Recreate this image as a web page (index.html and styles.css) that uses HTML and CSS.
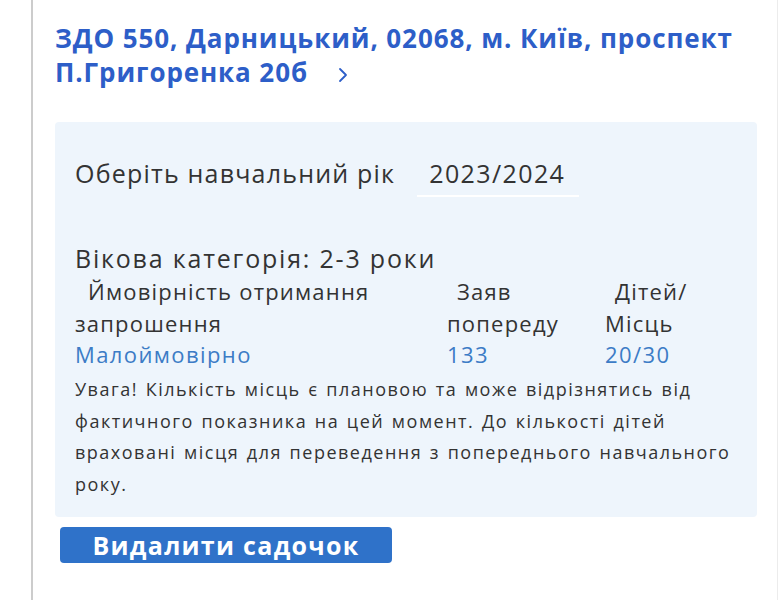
FILE: index.html
```html
<!DOCTYPE html>
<html lang="uk">
<head>
<meta charset="utf-8">
<title>ЗДО 550</title>
<link rel="stylesheet" href="styles.css">
</head>
<body>
<div class="page">
  <h2 class="title">ЗДО 550, Дарницький, 02068, м. Київ, проспект П.Григоренка 20б<svg class="chev" width="10" height="16" viewBox="0 0 10 16"><polyline points="2,2 8,8 2,14" fill="none" stroke="#2d5ec8" stroke-width="1.8" stroke-linecap="round" stroke-linejoin="round"/></svg></h2>
  <div class="panel">
    <div class="year-row">
      <span class="label">Оберіть навчальний рік</span>
      <span class="select">2023/2024</span>
    </div>
    <div class="age">Вікова категорія: 2-3 роки</div>
    <div class="table">
      <div class="th th-first">Ймовірність отримання запрошення</div>
      <div class="th th-mid">Заяв попереду</div>
      <div class="th th-last">Дітей/ Місць</div>
      <div class="td">Малоймовірно</div>
      <div class="td">133</div>
      <div class="td">20/30</div>
    </div>
    <p class="note">Увага! Кількість місць є плановою та може відрізнятись від фактичного показника на цей момент. До кількості дітей враховані місця для переведення з попереднього навчального року.</p>
  </div>
  <button class="btn">Видалити садочок</button>
</div>
</body>
</html>
```
FILE: styles.css
```css
html, body {
  margin: 0;
  padding: 0;
  background: #ffffff;
}
body {
  font-family: "Open Sans", "Liberation Sans", Arial, sans-serif;
  color: #333333;
}
.page {
  box-sizing: border-box;
  margin-left: 31px;
  width: 747px;
  min-height: 600px;
  border-left: 2px solid #cccccc;
  border-right: 1px solid #ececec;
  padding: 21px 20px 0 22px;
}
.title {
  margin: 0;
  font-size: 26px;
  line-height: 34px;
  font-weight: bold;
  letter-spacing: 0.9px;
  color: #2d5ec8;
}
.chev {
  margin-left: 30px;
  vertical-align: -1px;
}
.panel {
  margin-top: 33px;
  background: #eef5fc;
  border-radius: 4px;
  padding: 36px 20px 16px 20px;
}
.year-row {
  display: flex;
  align-items: flex-start;
  font-size: 25px;
  line-height: 30px;
  letter-spacing: 1.2px;
}
.select {
  margin-left: 22px;
  width: 162px;
  box-sizing: border-box;
  padding: 0 12px 7px 12px;
  border-bottom: 2px solid #ffffff;
  letter-spacing: 1.4px;
}
.age {
  margin-top: 46px;
  font-size: 25px;
  line-height: 30px;
  letter-spacing: 1.8px;
}
.table {
  display: grid;
  grid-template-columns: 372px 158px 1fr;
  margin-top: 2px;
  font-size: 22px;
  letter-spacing: 1.2px;
}
.th {
  line-height: 32px;
}
.th-first { text-indent: 13px; }
.th-mid { text-indent: 10px; }
.th-last { text-indent: 10px; width: 110px; }
.td {
  line-height: 30px;
  color: #3c7cc6;
  letter-spacing: 1.4px;
}
.note {
  margin: 5px 0 0 0;
  font-size: 18px;
  line-height: 31.7px;
  letter-spacing: 1.5px;
  word-spacing: 1.5px;
}
.btn {
  display: block;
  margin: 10px 0 0 5px;
  width: 332px;
  height: 36px;
  border: none;
  border-radius: 4px;
  background: #2f72c9;
  color: #ffffff;
  font-family: "Open Sans", "Liberation Sans", Arial, sans-serif;
  font-weight: bold;
  font-size: 25px;
  line-height: 36px;
  letter-spacing: 1.3px;
  padding: 0;
  text-align: center;
}
```
